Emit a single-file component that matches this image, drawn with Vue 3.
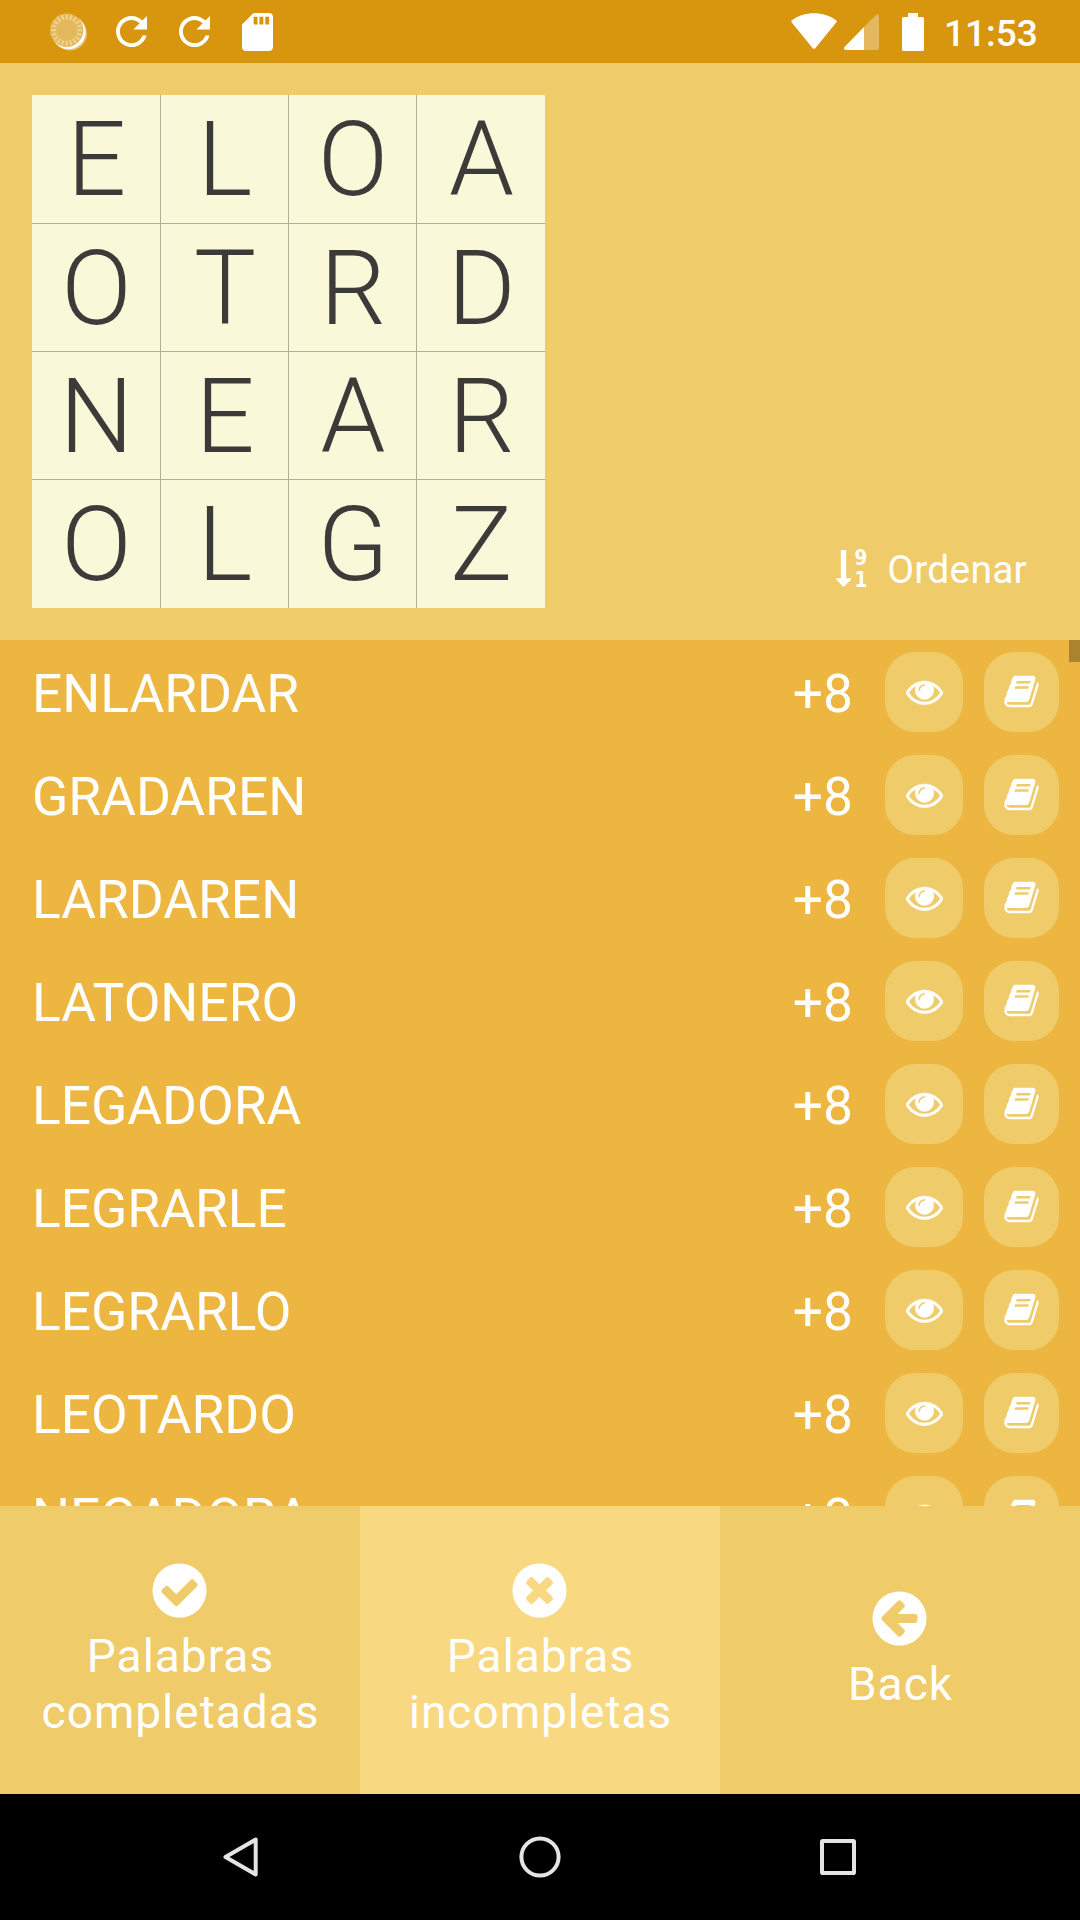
<script setup>
const letters = 'ELOAOTRDNEAROLGZ'.split('')
const words = ['ENLARDAR', 'GRADAREN', 'LARDAREN', 'LATONERO', 'LEGADORA', 'LEGRARLE', 'LEGRARLO', 'LEOTARDO', 'NEGADORA']
const rays = Array.from({ length: 20 }, (_, i) => i * 18)
const disc = 'q0 209-103 385.5t-279.5 279.5-385.5 103-385.5-103-279.5-279.5-103-385.5 103-385.5 279.5-279.5 385.5-103 385.5 103 279.5 279.5 103 385.5z'
const tabs = [
  {
    lines: ['Palabras', 'completadas'],
    icon: 'M1412 734q0-28-18-46l-91-90q-19-19-45-19t-45 19l-408 407-226-226q-19-19-45-19t-45 19l-91 90q-18 18-18 46 0 27 18 45l362 362q19 19 45 19 27 0 46-19l543-543q18-18 18-45zm252 162' + disc
  },
  {
    lines: ['Palabras', 'incompletas'],
    active: true,
    icon: 'M1277 1122q0-26-19-45l-181-181 181-181q19-19 19-45 0-27-19-46l-90-90q-19-19-46-19-26 0-45 19l-181 181-181-181q-19-19-45-19-27 0-46 19l-90 90q-19 19-19 46 0 26 19 45l181 181-181 181q-19 19-19 45 0 27 19 46l90 90q19 19 46 19 26 0 45-19l181-181 181 181q19 19 45 19 27 0 46-19l90-90q19-19 19-46zm387-226' + disc
  },
  {
    lines: ['Back'],
    icon: 'M1408 960v-128q0-26-19-45t-45-19h-502l189-189q19-19 19-45t-19-45l-91-91q-18-18-45-18t-45 18l-362 362-91 91q-18 18-18 45t18 45l91 91 362 362q18 18 45 18t45-18l91-91q18-18 18-45t-18-45l-189-189h502q26 0 45-19t19-45zm256-64' + disc
  }
]
</script>

<template>
  <div class="screen">
    <header class="status">
      <svg class="spinner" width="37" height="38" viewBox="0 0 37 38">
        <circle cx="20" cy="20.5" r="17" fill="#fff" opacity=".4" />
        <circle cx="18.6" cy="19.2" r="17" fill="#fff" />
        <circle cx="16.7" cy="17.2" r="16.7" fill="#e4b85c" />
        <g stroke="#efd297" stroke-width="2">
          <line v-for="a in rays" :key="a" x1="16.7" y1="1.5" x2="16.7" y2="6.5" :transform="`rotate(${a} 16.7 17.2)`" />
        </g>
      </svg>
      <svg v-for="n in 2" :key="n" class="reload" width="31" height="31" viewBox="4 4 16 16">
        <path fill="#fff" d="M17.65 6.35C16.2 4.9 14.21 4 12 4c-4.42 0-7.99 3.58-7.99 8s3.57 8 7.99 8c3.73 0 6.84-2.55 7.73-6h-2.08c-.82 2.33-3.04 4-5.65 4-3.31 0-6-2.69-6-6s2.69-6 6-6c1.66 0 3.14.69 4.22 1.78L13 11h7V4l-2.35 2.35z" />
      </svg>
      <svg class="sd" width="31" height="38" viewBox="4 2 16 20" preserveAspectRatio="none">
        <path fill="#fff" d="M18 2h-8L4.02 8 4 20c0 1.1.9 2 2 2h12c1.1 0 2-.9 2-2V4c0-1.1-.9-2-2-2zm-6 6h-2V4h2v4zm3 0h-2V4h2v4zm3 0h-2V4h2v4z" />
      </svg>
      <div class="system">
        <svg width="46" height="37" viewBox="0 0 46 37">
          <path fill="#fff" d="M.8 9.5Q-.3 8 1.2 7C7.500 2.500 14.500.2 23 .2s15.500 2.300 21.800 6.800q1.500 1 .4 2.500L24.500 35q-1.500 1.700-3 0z" />
        </svg>
        <svg class="signal" width="36" height="36" viewBox="0 0 36 36">
          <path fill="#e4b85c" d="M20 13 32 1q3-2 3 1.500V34q0 2-2 2H20z" />
          <path fill="#fff" d="M20 13V36H2q-3-.5-1.500-3z" />
        </svg>
        <svg class="battery" width="22" height="38" viewBox="0 0 22 38">
          <path fill="#fff" d="M6 0h10v4h4.500q1.500 0 1.500 1.500v31q0 1.500-1.500 1.500h-19Q0 38 0 36.500v-31Q0 4 1.500 4H6z" />
        </svg>
        <span class="clock">11:53</span>
      </div>
    </header>

    <section class="top">
      <div class="board">
        <span v-for="(l, i) in letters" :key="i" class="cell">{{ l }}</span>
      </div>
      <button class="sort">
        <svg class="order" width="32" height="38" viewBox="0 0 32 38">
          <path fill="#fff" d="M4.800 0h5.400v28.200H15q.9.300.2 1.200L8.300 36.200q-.8.600-1.600 0L.2 29.400q-.7-.9.3-1.200h4.300z" />
          <text x="25" y="15" class="digit">9</text>
          <text x="25" y="36.500" class="digit">1</text>
        </svg>
        <span>Ordenar</span>
      </button>
    </section>

    <main class="list">
      <div v-for="w in words" :key="w" class="row">
        <span class="word">{{ w }}</span>
        <span class="score">+8</span>
        <button class="btn eye">
          <svg width="37" height="37" viewBox="0 0 1792 1792"><path fill="#fff" stroke="#fff" stroke-width="24" d="M1664 960q-152-236-381-353 61 104 61 225 0 185-131.500 316.500t-316.500 131.500-316.500-131.500-131.500-316.500q0-121 61-225-229 117-381 353 133 205 333.500 326.500t434.500 121.500 434.500-121.500 333.500-326.500zm-720-384q0-20-14-34t-34-14q-125 0-214.500 89.500t-89.500 214.500q0 20 14 34t34 14 34-14 14-34q0-86 61-147t147-61q20 0 34-14t14-34zm848 384q0 34-20 69-140 230-376.500 368.500t-499.500 138.500-499.500-139-376.500-368q-20-35-20-69t20-69q140-229 376.500-368t499.500-139 499.500 139 376.500 368q20 35 20 69z" /></svg>
        </button>
        <button class="btn book">
          <svg width="37" height="37" viewBox="0 0 1792 1792"><path fill="#fff" d="M1703 478q40 57 18 129l-275 906q-19 64-76.500 107.500t-122.500 43.500h-923q-77 0-148.500-53.500t-99.500-131.500q-24-67-2-127 0-4 3-27t4-37q1-8-3-21.500t-3-19.500q2-11 8-21t16.500-23.500 16.500-23.500q23-38 45-91.500t30-91.500q3-10 .5-30t-.5-28q3-11 17-28t17-23q21-36 42-92t25-90q1-9-2.500-32t.5-28q4-13 22-30.500t22-22.500q19-26 42.500-84.500t27.500-96.500q1-8-3-25.500t-2-26.500q2-8 9-18t18-23 17-21q8-12 16.500-30.500t15-35 16-36 19.500-32 26.500-23.500 36-11.500 47.500 5.500l-1 3q38-9 51-9h761q74 0 114 56t18 130l-274 906q-36 119-71.500 153.500t-128.500 34.500h-869q-27 0-38 15-11 16-1 43 24 70 144 70h923q29 0 56-15.500t35-41.500l300-987q7-22 5-57 38 15 59 43zm-1064 2q-4 13 2 22.500t20 9.500h608q13 0 25.500-9.500t16.500-22.500l21-64q4-13-2-22.500t-20-9.500h-608q-13 0-25.500 9.500t-16.500 22.500zm-83 256q-4 13 2 22.500t20 9.500h608q13 0 25.500-9.500t16.500-22.500l21-64q4-13-2-22.500t-20-9.500h-608q-13 0-25.500 9.500t-16.500 22.500z" /></svg>
        </button>
      </div>
      <i class="thumb"></i>
    </main>

    <nav class="tabs">
      <button v-for="t in tabs" :key="t.lines.join()" class="tab" :class="{ active: t.active }">
        <svg width="63" height="63" viewBox="0 0 1792 1792"><path fill="#fff" :d="t.icon" /></svg>
        <span v-for="line in t.lines" :key="line">{{ line }}</span>
      </button>
    </nav>

    <footer class="android">
      <svg width="36" height="42" viewBox="0 0 36 42"><path d="M32.700 3.500v35L2.500 21z" /></svg>
      <svg class="home" width="42" height="42" viewBox="0 0 42 42"><circle cx="21" cy="21" r="18.600" /></svg>
      <svg class="recent" width="36" height="36" viewBox="0 0 36 36"><rect x="2" y="2" width="32" height="32" rx=".8" /></svg>
    </footer>
  </div>
</template>

<style>
body {
  margin: 0;
}
</style>

<style scoped>
.screen {
  width: 1080px;
  height: 1920px;
  display: flex;
  flex-direction: column;
  overflow: hidden;
  background: #efcb69;
  font-family: Roboto, sans-serif;
  color: #fff;
}
button {
  border: 0;
  margin: 0;
  padding: 0;
  background: none;
  font: inherit;
  color: inherit;
}
svg {
  display: block;
  flex: none;
}
.status {
  height: 63px;
  box-sizing: border-box;
  flex: none;
  display: flex;
  align-items: center;
  padding: 0 42px 0 50px;
  background: #d8960f;
}
.reload {
  margin-left: 29px;
}
.reload + .reload,
.sd {
  margin-left: 32px;
}
.system {
  margin-left: auto;
  display: flex;
  align-items: center;
}
.signal {
  margin-left: 7px;
}
.battery {
  margin-left: 22px;
}
.clock {
  width: 94px;
  margin-left: 20px;
  font-size: 37px;
  font-weight: 500;
  line-height: 40px;
  white-space: nowrap;
  padding-top: 4px;
}
.top {
  height: 577px;
  box-sizing: border-box;
  flex: none;
  display: flex;
  justify-content: space-between;
  align-items: flex-start;
  padding: 32px 53px 0 32px;
}
.board {
  display: grid;
  grid-template-columns: 129px 128px 128px 128px;
  grid-template-rows: 129px 128px 128px 128px;
  background: #f9f8d9;
}
.cell {
  box-sizing: border-box;
  border-right: 1px solid #b1ae9a;
  border-bottom: 1px solid #b1ae9a;
  padding-left: 1px;
  font-size: 104px;
  font-weight: 300;
  line-height: 130px;
  text-align: center;
  color: #3d3b39;
}
.cell:nth-child(4n) {
  border-right: 0;
}
.cell:nth-child(n + 13) {
  border-bottom: 0;
}
.sort {
  display: flex;
  align-items: center;
  gap: 19px;
  margin-top: 453px;
  font-size: 39px;
  line-height: 44px;
  letter-spacing: 0.2px;
}
.order {
  overflow: visible;
  margin-top: -2px;
}
.digit {
  font: bold 20.5px 'DejaVu Sans Condensed', 'DejaVu Sans', sans-serif;
  letter-spacing: 0;
  fill: #fff;
  text-anchor: middle;
}
.list {
  position: relative;
  height: 866px;
  box-sizing: border-box;
  flex: none;
  overflow: hidden;
  background: #edb641;
}
.row {
  height: 103px;
  display: flex;
  align-items: center;
  padding: 0 21px 0 32px;
  font-size: 53.3px;
}
.word,
.score {
  padding-top: 5px;
}
.score {
  margin-left: auto;
}
.btn {
  height: 80px;
  display: flex;
  align-items: center;
  justify-content: center;
  border-radius: 30px;
  background: #efcb69;
}
.eye {
  width: 78px;
  margin-left: 32px;
}
.book {
  width: 75px;
  margin-left: 21px;
}
.thumb {
  position: absolute;
  right: 0;
  top: 0;
  width: 11px;
  height: 22px;
  background: #aa832c;
}
.tabs {
  height: 288px;
  flex: none;
  display: grid;
  grid-template-columns: repeat(3, 1fr);
}
.tab {
  display: flex;
  flex-direction: column;
  align-items: center;
  justify-content: center;
  padding-bottom: 1px;
  font-size: 46px;
  line-height: 56px;
  letter-spacing: 1px;
}
.tab svg {
  margin: 0 1px 6px 0;
}
.tab span {
  margin-right: -1px;
}
.active {
  background: #f8d881;
}
.android {
  flex: 1;
  display: flex;
  align-items: center;
  padding-left: 223px;
  background: #000;
}
.android svg {
  fill: none;
  stroke: #e4e4e4;
  stroke-width: 4;
  stroke-linejoin: round;
}
.home {
  margin-left: 260px;
}
.recent {
  margin-left: 259px;
}
</style>
